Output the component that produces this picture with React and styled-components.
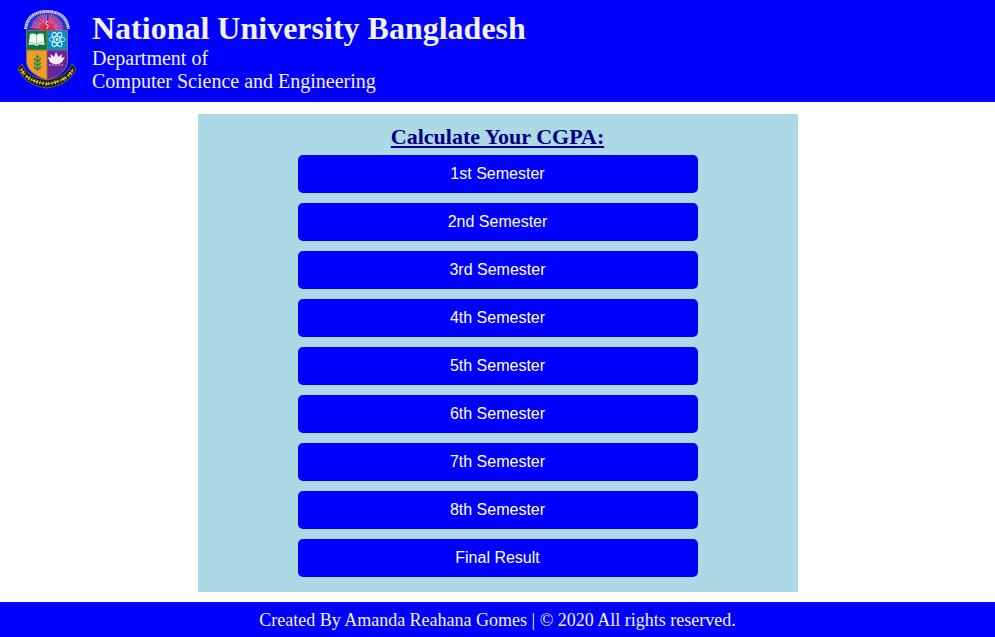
import React from "react";
import styled, { createGlobalStyle } from "styled-components";

const GlobalStyle = createGlobalStyle`
  * {
    box-sizing: border-box;
  }

  body {
    margin: 0;
    background: #ffffff;
    font-family: "Liberation Serif", "Times New Roman", serif;
  }
`;

const Page = styled.div`
  display: flex;
  flex-direction: column;
  min-height: 100vh;
`;

const Header = styled.header`
  display: flex;
  align-items: flex-start;
  gap: 15px;
  padding: 9px 17px;
  background: blue;
  color: #f1f1f1;
`;

const Crest = styled.svg`
  flex: none;
  width: 60px;
  height: 80px;
`;

const UniversityName = styled.h1`
  margin: 0;
  font-size: 32px;
  line-height: 38px;
`;

const Department = styled.p`
  margin: 0;
  font-size: 20px;
  line-height: 23px;
`;

const Main = styled.main`
  flex: 1;
  padding: 12px 10px 10px;
`;

const Panel = styled.section`
  display: flex;
  flex-direction: column;
  align-items: center;
  gap: 10px;
  max-width: 600px;
  margin: 0 auto;
  padding: 10px 20px 15px;
  background: lightblue;
`;

const PanelTitle = styled.h2`
  margin: 0 0 -5px;
  color: navy;
  font-size: 22px;
  line-height: 26px;
  text-decoration: underline;
`;

const SemesterButton = styled.button`
  width: 100%;
  max-width: 400px;
  padding: 10px;
  border: 0;
  border-radius: 5px;
  background: blue;
  color: #ffffff;
  font-family: "Liberation Sans", Arial, sans-serif;
  font-size: 16px;
  line-height: 18px;
  cursor: pointer;
`;

const Footer = styled.footer`
  padding: 8px 8px 7px;
  background: blue;
  color: #f1f1f1;
  font-size: 18px;
  line-height: 20px;
  text-align: center;
`;

const choices = [
  "1st Semester",
  "2nd Semester",
  "3rd Semester",
  "4th Semester",
  "5th Semester",
  "6th Semester",
  "7th Semester",
  "8th Semester",
  "Final Result",
];

const rayAngles = [-80, -66, -52, -38, -24, -10, 10, 24, 38, 52, 66, 80];

function UniversityCrest() {
  return (
    <Crest viewBox="0 0 60 80" role="img" aria-label="National University crest">
      <defs>
        <clipPath id="shield">
          <path d="M9.5 21.5H50.5V52C50.5 62 41 67 30 71C19 67 9.5 62 9.5 52Z" />
        </clipPath>
      </defs>

      {/* Rising sun */}
      <path d="M9 22C9 9 18 3 30 3S51 9 51 22Z" fill="#1c35e6" />
      <g stroke="#f0365c" strokeWidth="1.6">
        {rayAngles.map((angle) => (
          <path key={angle} d="M30 20V4.5" transform={`rotate(${angle} 30 21)`} />
        ))}
      </g>
      <g stroke="#d9c6ec" strokeWidth=".6">
        {rayAngles.map((angle) => (
          <path key={angle} d="M30 13V5" transform={`rotate(${angle + 7} 30 21)`} />
        ))}
      </g>
      <path d="M24 22A6 6 0 0 1 36 22Z" fill="#e11f45" />
      <path d="M31 12L28.5 14.5L31.5 17L29.5 20" fill="none" stroke="#fff" strokeWidth="1" />
      <path d="M8.5 20C10 8 18 2.5 30 2.5S50 8 51.5 20" fill="none" stroke="#6b70b0" strokeWidth="3" />
      <path
        d="M8.5 20C10 8 18 2.5 30 2.5S50 8 51.5 20"
        fill="none"
        stroke="#e2e2ee"
        strokeWidth="3"
        strokeDasharray="1.2 1 .8 .9"
      />

      {/* Quartered shield */}
      <g clipPath="url(#shield)">
        <path d="M9 21H30V41H9Z" fill="#087b3f" />
        <path d="M30 21H51V41H30Z" fill="#078ac5" />
        <path d="M9 41H30V72H9Z" fill="#f29b26" />
        <path d="M30 41H51V72H30Z" fill="#68259a" />
        <path d="M30 21V72M9 41H51" stroke="#8b7154" strokeWidth="1" />
      </g>
      <path
        d="M9.5 21.5H50.5V52C50.5 62 41 67 30 71C19 67 9.5 62 9.5 52Z"
        fill="none"
        stroke="#826c65"
        strokeWidth="1"
      />

      {/* Open book */}
      <path
        d="M13 25C16 24 18 24.5 19.5 26C21 24.5 24 24 26.5 25L27.5 36C24 35 21 35.5 19.5 37C18 35.5 15 35 11.5 36Z"
        fill="#f1fff6"
      />
      <path d="M19.5 26V36M12 34C16 33 18 34 19.5 36C22 34 24 33 27 34" fill="none" stroke="#75aa8b" strokeWidth=".7" />

      {/* Atom */}
      <g fill="none" stroke="#c8f2ff" strokeWidth="1">
        <ellipse cx="40" cy="30.5" rx="8" ry="3" />
        <ellipse cx="40" cy="30.5" rx="8" ry="3" transform="rotate(60 40 30.5)" />
        <ellipse cx="40" cy="30.5" rx="8" ry="3" transform="rotate(120 40 30.5)" />
      </g>
      <circle cx="40" cy="30.5" r="1.4" fill="#e7faff" />

      {/* Leaf sprig */}
      <path d="M20.5 46V62" stroke="#26843b" strokeWidth="1" />
      <path
        d="M20.5 45L18.7 48L20.5 50L22.3 48ZM20.5 53C18 53 17 51 16.8 49C19 49 20 51 20.5 53C21 51 22 49 24.2 49C24 51 23 53 20.5 53ZM20.5 57C18 57 17 55 16.3 53C19 53 20 55 20.5 57C21 55 22 53 24.7 53C24 55 23 57 20.5 57ZM20.5 61C18 61 17 59 16.3 57C19 57 20 59 20.5 61C21 59 22 57 24.7 57C24 59 23 61 20.5 61Z"
        fill="#328d3e"
      />

      {/* Water lily */}
      <path
        d="M39 43L41.5 48L45 45L44.5 49L48 48L45 53C41 56 37 56 33 53L30.8 48L34 49L33.5 45L37 48Z"
        fill="#fff2ff"
      />
      <path d="M39 46V53M35 49L38 53M43 49L40 53" stroke="#dcbde6" strokeWidth=".6" />
      <path d="M32 56H46" stroke="#dbbce4" strokeWidth="1.2" strokeDasharray="2 1" />

      {/* Ribbon with its yellow ornament */}
      <path
        d="M1 60L5 55C10 66 18 69 30 71C42 69 50 66 55 55L59 60C53 73 43 77 30 79C17 77 7 73 1 60Z"
        fill="#17190f"
        stroke="#94815b"
        strokeWidth=".7"
      />
      <path
        d="M4 60C9 70 18 73 30 75C42 73 51 70 56 60"
        fill="none"
        stroke="#c4b02f"
        strokeWidth="1.4"
        strokeDasharray="6 2 5 1 7 2"
      />
      <path
        d="M4 60C9 70 18 73 30 75C42 73 51 70 56 60"
        fill="none"
        stroke="#e8d638"
        strokeWidth="4"
        strokeDasharray=".8 2.2 1.1 1.6 .7 2.6"
      />
    </Crest>
  );
}

export default function App() {
  return (
    <>
      <GlobalStyle />
      <Page>
        <Header>
          <UniversityCrest />
          <div>
            <UniversityName>National University Bangladesh</UniversityName>
            <Department>
              Department of
              <br />
              Computer Science and Engineering
            </Department>
          </div>
        </Header>
        <Main>
          <Panel aria-labelledby="calculator-title">
            <PanelTitle id="calculator-title">Calculate Your CGPA:</PanelTitle>
            {choices.map((choice) => (
              <SemesterButton key={choice} type="button">
                {choice}
              </SemesterButton>
            ))}
          </Panel>
        </Main>
        <Footer>Created By Amanda Reahana Gomes | © 2020 All rights reserved.</Footer>
      </Page>
    </>
  );
}
